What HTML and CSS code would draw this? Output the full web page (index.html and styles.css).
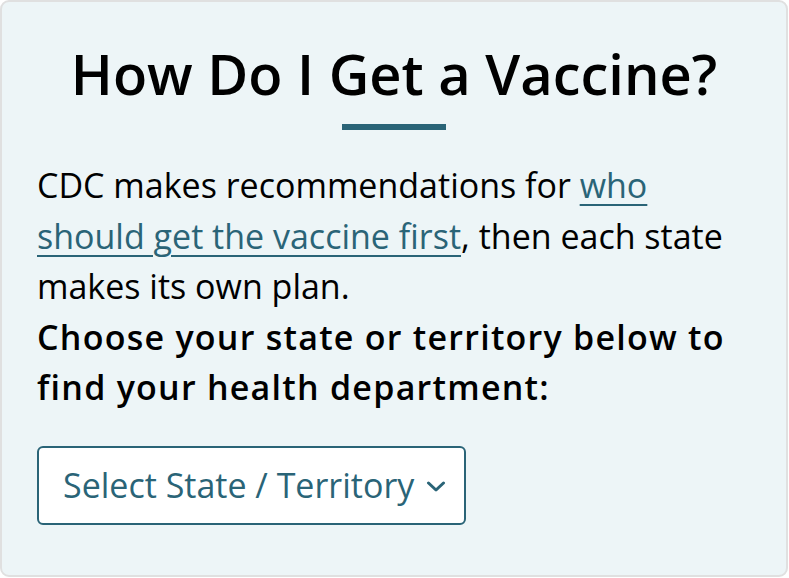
FILE: index.html
```html
<!DOCTYPE html>
<html lang="en">

<head>
    <meta charset="UTF-8">
    <title>How Do I Get a Vaccine?</title>
    <link rel="stylesheet" href="styles.css">
</head>

<body>

    <div class="card">
        <h1 class="card-title">How Do I Get a Vaccine?</h1>
        <div class="divider"></div>

        <p class="intro">CDC makes recommendations for <a href="#">who should get the vaccine first</a>, then each state makes its own plan.</p>
        <p class="prompt">Choose your state or territory below to find your health department:</p>

        <button class="state-select" type="button">
            <span>Select State / Territory</span>
            <!-- chevron -->
            <svg class="chevron" width="20" height="11" viewBox="0 0 20 11">
                <path d="M2.5 2 L10 9 L17.5 2" fill="none" stroke="currentColor" stroke-width="3" stroke-linecap="round" stroke-linejoin="round" />
            </svg>
        </button>
    </div>

</body>

</html>
```

FILE: styles.css
```css
* {
    box-sizing: border-box;
}

html,
body {
    margin: 0;
    padding: 0;
    background: #fff;
    font-family: "Open Sans", Arial, sans-serif;
}

.card {
    width: 788px;
    height: 577px;
    background: #edf5f7;
    border: 2px solid #e0e0e0;
    border-radius: 9px;
    padding: 37px 35px 0 35px;
}

.card-title {
    margin: 0;
    text-align: center;
    font-size: 56px;
    font-weight: 600;
    line-height: 68px;
    color: #000;
}

.divider {
    width: 104px;
    height: 6px;
    background: #2a6477;
    margin: 17px auto 0;
}

.intro,
.prompt {
    margin: 0;
    font-size: 34px;
    line-height: 50.5px;
    color: #000;
}

.intro {
    margin-top: 30px;
}

.intro a {
    color: #2a6477;
    text-decoration: underline;
    text-underline-offset: 6px;
    text-decoration-thickness: 2px;
}

.prompt {
    font-weight: 600;
    letter-spacing: 1.25px;
}

.state-select {
    display: flex;
    align-items: center;
    gap: 12px;
    margin-top: 33px;
    height: 79px;
    padding: 0 18px 0 24px;
    background: #fff;
    border: 2px solid #2a6477;
    border-radius: 6px;
    font-family: inherit;
    font-size: 34px;
    color: #2a6477;
}

.chevron {
    margin-top: 3px;
}
```
